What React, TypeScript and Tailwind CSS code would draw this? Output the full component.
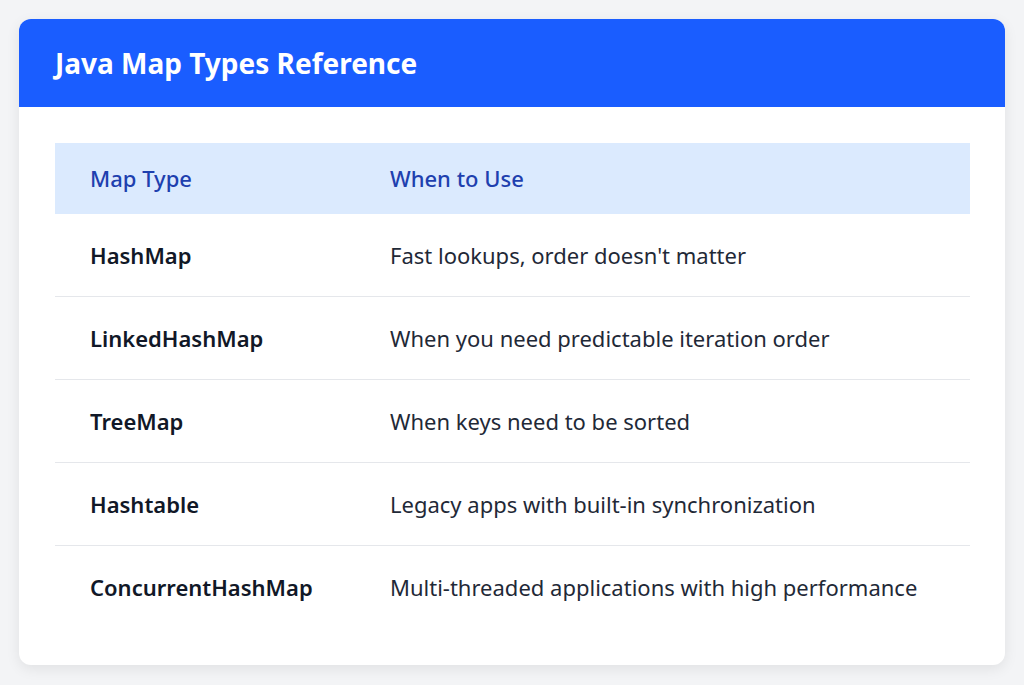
import React from "react";

const rows = [
  ["HashMap", "Fast lookups, order doesn't matter"],
  ["LinkedHashMap", "When you need predictable iteration order"],
  ["TreeMap", "When keys need to be sorted"],
  ["Hashtable", "Legacy apps with built-in synchronization"],
  ["ConcurrentHashMap", "Multi-threaded applications with high performance"],
];

export default function App() {
  return (
    <div
      className="min-h-[685px] w-full bg-[#f3f4f6] pt-[19px] pl-[19px] pr-[19px]"
      style={{ fontFamily: '"Noto Sans", "Open Sans", sans-serif' }}
    >
      <div className="w-[986px] overflow-hidden rounded-xl bg-white shadow-[0_4px_14px_rgba(0,0,0,0.08)]">
        <div className="flex h-[88px] items-center bg-[#1a5dff] px-9">
          <h1 className="text-[28px] font-bold leading-none text-white">Java Map Types Reference</h1>
        </div>
        <div className="p-9">
          <div className="w-[915px]">
            <div className="grid h-[71px] grid-cols-[335px_1fr] items-center bg-[#dbeafe] text-[22px] font-medium text-[#1e40af]">
              <div className="pl-[35px]">Map Type</div>
              <div>When to Use</div>
            </div>
            {rows.map(([a, b], i) => (
              <div
                key={a}
                className={`grid h-[83px] grid-cols-[335px_1fr] items-center text-[22px] ${
                  i < rows.length - 1 ? "border-b border-[#e5e7eb]" : ""
                }`}
              >
                <div className="pl-[35px] font-semibold text-[#111827]">{a}</div>
                <div className="text-[#1f2937]">{b}</div>
              </div>
            ))}
          </div>
        </div>
      </div>
    </div>
  );
}
